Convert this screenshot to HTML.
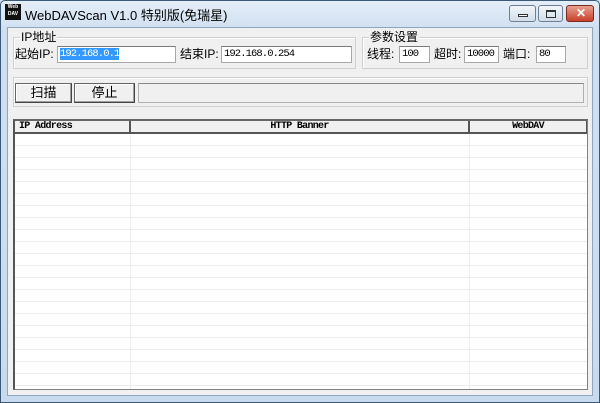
<!DOCTYPE html>
<html><head><style>
*{margin:0;padding:0;box-sizing:border-box}
body{width:600px;height:403px;background:#cfdff0;font-family:"Liberation Sans","Noto Sans CJK SC",sans-serif;font-size:12px;position:relative;overflow:hidden}
.frame{position:absolute;left:0;top:0;width:600px;height:403px;border:1px solid #3c5a78;background:linear-gradient(#e4eef8,#cfdff0 30px,#c8dbee);border-radius:5px 5px 0 0}
.title{position:absolute;left:25px;top:5px;font-size:13px;color:#000}
.icon{position:absolute;left:5px;top:4px;width:16px;height:16px;background:#111;color:#fff;font-size:5px;line-height:7px;text-align:center;font-weight:bold}
.client{position:absolute;left:7px;top:27px;width:586px;height:369px;background:#f0f0f0;border:1px solid #8fa6bd}
.btn{position:absolute;top:5px;height:17px;border:1px solid #6d7f95;border-radius:3px;background:linear-gradient(#f2f6fa,#d3dde9)}
.a{position:absolute}
.grp{position:absolute;border:1px solid #d0d0d0;box-shadow:inset 1px 1px 0 #fff}
.lg{position:absolute;top:-8px;left:6px;background:#f0f0f0;padding:0 1px;font-size:12px;line-height:14px}
.in{position:absolute;height:17px;background:#fff;border:1px solid #a8a8a8;border-top-color:#7a7a7a;font-family:"Liberation Mono",monospace;font-size:10.5px;letter-spacing:-0.9px;line-height:15px;padding-left:2px}
.pb{position:absolute;height:20px;border:1px solid #646464;border-right-color:#444;border-bottom-color:#444;background:#f0f0f0;box-shadow:inset -1px -1px 0 #a0a0a0,inset 1px 1px 0 #fff;text-align:center;line-height:18px;font-size:13px}
.list{position:absolute;left:13px;top:119px;width:575px;height:271px;border:1px solid #828282;border-left:2px solid #555;border-top:2px solid #666;background:#fff;overflow:hidden}
.hd{position:absolute;top:0;height:13px;border-right:2px solid #555;border-bottom:2px solid #555;background:#f0f0f0;font-family:"Liberation Mono",monospace;font-size:10px;letter-spacing:-0.7px;font-weight:bold;line-height:11px}
.lb{position:absolute;top:47px;line-height:14px}
</style></head><body>
<div class="frame"></div>
<div class="icon">Web<br>DAV</div>
<div class="title">WebDAVScan V1.0 特别版(免瑞星)</div>
<div class="btn" style="left:509px;width:27px"><div class="a" style="left:8px;top:8px;width:10px;height:3px;border:1px solid #333;background:#fff"></div></div>
<div class="btn" style="left:538px;width:25px"><div class="a" style="left:7px;top:4px;width:10px;height:8px;border:1px solid #333;border-top-width:2px"></div></div>
<div class="btn" style="left:566px;width:28px;background:linear-gradient(#e8a090,#c8402a);border-color:#7a2a20"><div class="a" style="left:9px;top:0;color:#fff;font-weight:bold;font-size:12px">✕</div></div>
<div class="client"></div>
<div class="grp" style="left:13px;top:37px;width:343px;height:32px"><span class="lg">IP地址</span></div>
<div class="lb" style="left:15px">起始IP:</div>
<div class="in" style="left:57px;top:46px;width:119px"><span style="background:#3399ff;color:#fff">192.168.0.1</span></div>
<div class="lb" style="left:180px">结束IP:</div>
<div class="in" style="left:221px;top:46px;width:131px">192.168.0.254</div>
<div class="grp" style="left:362px;top:37px;width:226px;height:32px"><span class="lg">参数设置</span></div>
<div class="lb" style="left:367px">线程:</div>
<div class="in" style="left:399px;top:46px;width:31px">100</div>
<div class="lb" style="left:434px">超时:</div>
<div class="in" style="left:464px;top:46px;width:35px">10000</div>
<div class="lb" style="left:503px">端口:</div>
<div class="in" style="left:536px;top:46px;width:30px">80</div>
<div class="grp" style="left:13px;top:77px;width:575px;height:30px"></div>
<div class="pb" style="left:15px;top:83px;width:57px">扫描</div>
<div class="pb" style="left:74px;top:83px;width:61px">停止</div>
<div class="a" style="left:138px;top:83px;width:446px;height:20px;border:1px solid #b0b0b0;border-top-color:#888"></div>
<div class="list">
<div style="position:absolute;left:0;top:13px;right:0;bottom:0;background:repeating-linear-gradient(#fff 0,#fff 11px,#ececec 11px,#ececec 12px)"></div>
<div style="position:absolute;left:115px;top:13px;bottom:0;width:1px;background:#eee"></div>
<div style="position:absolute;left:454px;top:13px;bottom:0;width:1px;background:#eee"></div>
<div class="hd" style="left:0;width:116px;padding-left:4px">IP Address</div>
<div class="hd" style="left:116px;width:339px;text-align:center">HTTP Banner</div>
<div class="hd" style="left:455px;width:118px;text-align:center">WebDAV</div>
</div>
</body></html>
